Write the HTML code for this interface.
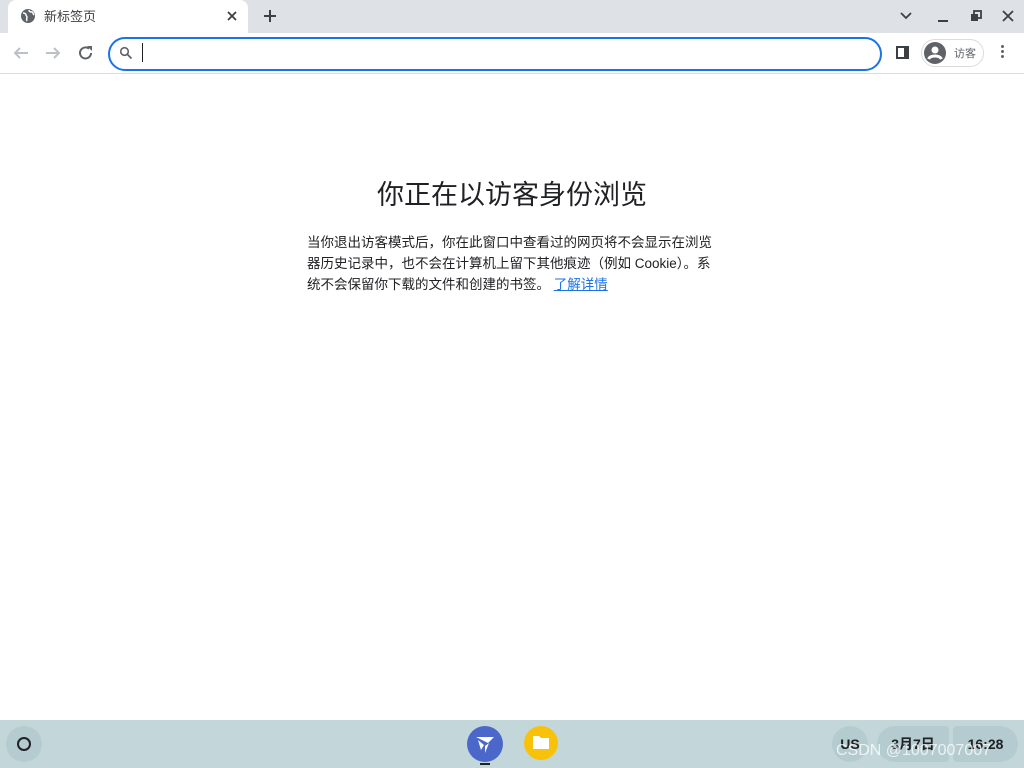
<!DOCTYPE html><html><head><meta charset="utf-8"><style>
*{margin:0;padding:0;box-sizing:border-box}
body{width:1024px;height:768px;overflow:hidden;background:#fff;font-family:"Liberation Sans","Noto Sans CJK SC",sans-serif;position:relative}
.tabs{position:absolute;left:0;top:0;width:1024px;height:33px;background:#dee1e6}
.tab{position:absolute;left:8px;top:0;width:240px;height:33px;background:#fff;border-radius:8px 8px 0 0}
.tb{position:absolute;top:33px;left:0;width:1024px;height:41px;background:#fff;border-bottom:1px solid #dadce0}
.omni{position:absolute;left:108px;top:37px;width:774px;height:34px;border:2px solid #1a73e8;border-radius:17px}
.abs{position:absolute}
.task{position:absolute;left:0;top:720px;width:1024px;height:48px;background:#c3d7db}
.pill{position:absolute;top:726px;height:36px;background:#b4cbd0;border-radius:18px;font-size:14px;font-weight:bold;color:#202124;text-align:center;line-height:36px}
</style></head><body>
<div class="tabs"></div>
<div class="tab"></div>
<svg class="abs" style="left:20px;top:8px" width="16" height="16" viewBox="0 0 16 16"><circle cx="8" cy="8" r="7" fill="#5f6368"/><path d="M3 5c2 0 3 1 3 2s1 1 1 2-1 2 0 4M9 2c0 2 2 2 3 2s1 2 2 3" stroke="#fff" stroke-width="1.5" fill="none"/></svg>
<div class="abs" style="left:44px;top:6px;font-size:13px;color:#3c4043">新标签页</div>
<svg class="abs" style="left:227px;top:11px" width="10" height="10"><path d="M1 1l8 8M9 1L1 9" stroke="#3c4043" stroke-width="1.8"/></svg>
<svg class="abs" style="left:263px;top:9px" width="14" height="14"><path d="M7 1v12M1 7h12" stroke="#3c4043" stroke-width="2"/></svg>
<svg class="abs" style="left:898px;top:10px" width="16" height="12"><path d="M3 3l5 5 5-5" stroke="#3c4043" stroke-width="1.8" fill="none"/></svg>
<div class="abs" style="left:938px;top:20px;width:10px;height:2px;background:#3c4043"></div>
<svg class="abs" style="left:970px;top:10px" width="12" height="12"><rect x="4" y="1" width="7" height="7" fill="none" stroke="#3c4043" stroke-width="1.8"/><rect x="1" y="4" width="7" height="7" fill="#3c4043"/></svg>
<svg class="abs" style="left:1002px;top:10px" width="12" height="12"><path d="M1 1l10 10M11 1L1 11" stroke="#3c4043" stroke-width="1.8"/></svg>
<div class="tb"></div>
<svg class="abs" style="left:12px;top:44px" width="18" height="18"><path d="M16 9H3M8 4L3 9l5 5" stroke="#bdc1c6" stroke-width="2" fill="none"/></svg>
<svg class="abs" style="left:44px;top:44px" width="18" height="18"><path d="M2 9h13M10 4l5 5-5 5" stroke="#bdc1c6" stroke-width="2" fill="none"/></svg>
<svg class="abs" style="left:77px;top:44px" width="18" height="18"><path d="M14 9a5.5 5.5 0 1 1-2-4.3" stroke="#5f6368" stroke-width="2" fill="none"/><path d="M10 2h5v5z" fill="#5f6368"/></svg>
<div class="omni"></div>
<svg class="abs" style="left:119px;top:46px" width="14" height="14"><circle cx="5.5" cy="5.5" r="3.8" stroke="#5f6368" stroke-width="1.6" fill="none"/><path d="M8.5 8.5l4 4" stroke="#5f6368" stroke-width="1.8"/></svg>
<div class="abs" style="left:142px;top:43px;width:1px;height:19px;background:#202124"></div>
<div class="abs" style="left:896px;top:46px;width:13px;height:13px;border:2px solid #3c4043;border-right-width:5px"></div>
<div class="abs" style="left:921px;top:39px;width:63px;height:28px;border:1px solid #dadce0;border-radius:14px"></div>
<svg class="abs" style="left:924px;top:42px" width="22" height="22"><circle cx="11" cy="11" r="11" fill="#5f6368"/><circle cx="11" cy="8" r="3.5" fill="#fff"/><path d="M4.5 17c2-4 11-4 13 0" stroke="#fff" stroke-width="3" fill="none"/></svg>
<div class="abs" style="left:954px;top:45px;font-size:11px;color:#5f6368">访客</div>
<div class="abs" style="left:1001px;top:45px;width:3px;height:3px;border-radius:50%;background:#5f6368;box-shadow:0 5px #5f6368,0 10px #5f6368"></div>
<div class="abs" style="left:0;top:173px;width:1024px;text-align:center;font-size:27px;color:#202124">你正在以访客身份浏览</div>
<div class="abs" style="left:307px;top:232px;width:412px;font-size:13.5px;line-height:21px;color:#202124">当你退出访客模式后，你在此窗口中查看过的网页将不会显示在浏览器历史记录中，也不会在计算机上留下其他痕迹（例如 Cookie）。系统不会保留你下载的文件和创建的书签。 <span style="color:#1a73e8;text-decoration:underline">了解详情</span></div>
<div class="task"></div>
<div class="abs" style="left:6px;top:726px;width:36px;height:36px;border-radius:50%;background:#b4cbd0"></div>
<div class="abs" style="left:17px;top:737px;width:14px;height:14px;border:2px solid #202124;border-radius:50%"></div>
<svg class="abs" style="left:467px;top:726px" width="36" height="36"><circle cx="18" cy="18" r="18" fill="#4a67c9"/><path d="M9 11h18l-6 6zM11 14l6 5-3 5zM18 20l4-3-4 10z" fill="#fff"/></svg>
<div class="abs" style="left:480px;top:763px;width:10px;height:2px;background:#202124"></div>
<svg class="abs" style="left:524px;top:726px" width="34" height="34"><circle cx="17" cy="17" r="17" fill="#f9c20a"/><path d="M9 10h6l2 2h8v11H9z" fill="#fff"/></svg>
<div class="pill" style="left:832px;width:36px">US</div>
<div class="pill" style="left:877px;width:72px;border-radius:18px 4px 4px 18px">3月7日</div>
<div class="pill" style="left:953px;width:65px;border-radius:4px 18px 18px 4px">16:28</div>
<div class="abs" style="left:836px;top:742px;font-size:16px;color:rgba(255,255,255,.75)">CSDN @1007007007</div>
</body></html>
